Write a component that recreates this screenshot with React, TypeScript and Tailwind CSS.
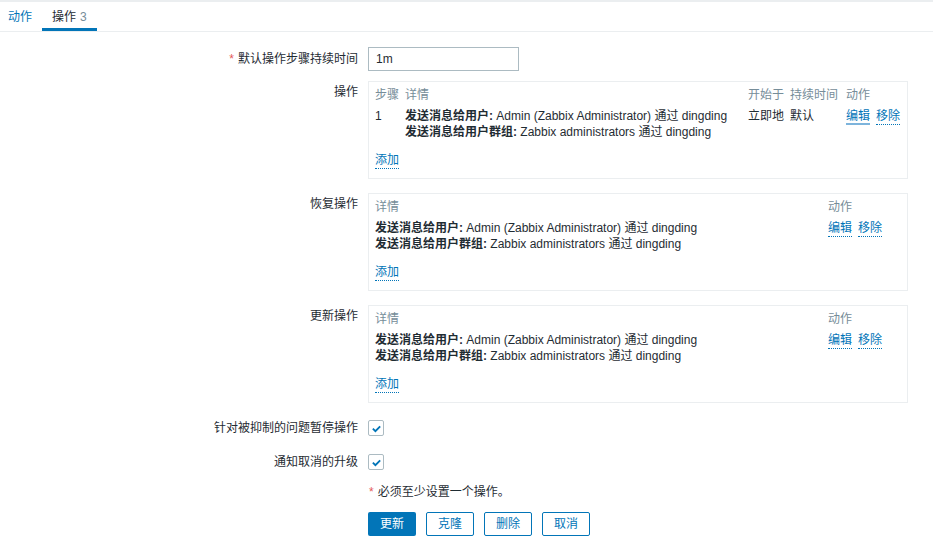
import React from "react";

const FONT = "font-['Liberation_Sans','Noto_Sans_CJK_SC',Arial,sans-serif]";

const links = "leading-[15px] border-b border-dotted border-[#0275b8] text-[#0275b8] cursor-pointer";

function Check() {
  return (
    <span className="flex h-4 w-4 items-center justify-center rounded-[2px] border border-[#acbbc2] bg-white">
      <svg viewBox="0 0 12 12" className="h-[11px] w-[11px]">
        <path d="M2 6.2 L4.8 9 L10 3.6" fill="none" stroke="#0275b8" strokeWidth="2" />
      </svg>
    </span>
  );
}

function Row({
  label,
  required,
  top,
  children,
  className = "",
}: {
  label?: string;
  required?: boolean;
  top?: boolean;
  children: React.ReactNode;
  className?: string;
}) {
  return (
    <div className={`flex ${top ? "items-start" : "items-center"} gap-[10px] ${className}`}>
      <div className={`w-[358px] shrink-0 text-right ${top ? "pt-[3px]" : ""}`}>
        {required && <span className="mr-[4px] text-[#e45959]">*</span>}
        {label}
      </div>
      <div>{children}</div>
    </div>
  );
}

function Ops({ text1, text2 }: { text1: string; text2: string }) {
  return (
    <div className="leading-4">
      <div>
        <b>发送消息给用户:</b> {text1}
      </div>
      <div>
        <b>发送消息给用户群组:</b> {text2}
      </div>
    </div>
  );
}

function OpBox({ steps }: { steps?: boolean }) {
  return (
    <div className="w-[540px] border border-[#ebeef0] px-[6px] pt-[5px] pb-[10px]">
      {steps ? (
        <div className="grid grid-cols-[30px_1fr_42px_56px_55px]">
          <div className="text-[#768d99]">步骤</div>
          <div className="text-[#768d99]">详情</div>
          <div className="text-[#768d99]">开始于</div>
          <div className="text-[#768d99]">持续时间</div>
          <div className="text-[#768d99]">动作</div>
          <div className="mt-[5px]">1</div>
          <div className="mt-[5px]">
            <Ops
              text1="Admin (Zabbix Administrator) 通过 dingding"
              text2="Zabbix administrators 通过 dingding"
            />
          </div>
          <div className="mt-[5px]">立即地</div>
          <div className="mt-[5px]">默认</div>
          <div className="mt-[6px] flex items-start gap-[6px]">
            <span className="leading-[14px] border-b-2 border-solid border-[#7db4dc] text-[#0275b8] cursor-pointer">编辑</span>
            <span className={links}>移除</span>
          </div>
        </div>
      ) : (
        <div className="grid grid-cols-[1fr_73px]">
          <div className="text-[#768d99]">详情</div>
          <div className="text-[#768d99]">动作</div>
          <div className="mt-[5px]">
            <Ops
              text1="Admin (Zabbix Administrator) 通过 dingding"
              text2="Zabbix administrators 通过 dingding"
            />
          </div>
          <div className="mt-[6px] flex items-start gap-[6px]">
            <span className={links}>编辑</span>
            <span className={links}>移除</span>
          </div>
        </div>
      )}
      <div className="mt-[12px] h-4">
        <span className={`inline-block ${links}`}>添加</span>
      </div>
    </div>
  );
}

export default function App() {
  return (
    <div className={`min-h-[545px] w-[933px] bg-white text-[12px] leading-4 text-[#1f2c33] ${FONT}`}>
      <div className="h-[2px] bg-[#ebeef0]" />
      <div className="flex h-[30px] items-stretch border-b border-[#ebeef0]">
        <div className="flex items-center pl-[8px] pr-[10px] text-[#0275b8]">动作</div>
        <div className="flex items-center border-b-[3px] border-[#0275b8] px-[10px] pt-[3px]">
          操作 <span className="ml-[4px] text-[#768d99]">3</span>
        </div>
      </div>

      <div className="pt-[15px]">
        <Row label="默认操作步骤持续时间" required>
          <input
            defaultValue="1m"
            className="h-6 w-[151px] border border-[#acbbc2] px-[7px] text-[12px] text-[#1f2c33] outline-none"
          />
        </Row>
        <Row label="操作" top className="mt-[10px]">
          <OpBox steps />
        </Row>
        <Row label="恢复操作" top className="mt-[14px]">
          <OpBox />
        </Row>
        <Row label="更新操作" top className="mt-[14px]">
          <OpBox />
        </Row>
        <Row label="针对被抑制的问题暂停操作" className="mt-[13px] h-6">
          <Check />
        </Row>
        <Row label="通知取消的升级" className="mt-[10px] h-6">
          <Check />
        </Row>
        <Row className="mt-[10px]">
          <div className="pl-[1px]">
            <span className="mr-[4px] text-[#e45959]">*</span>必须至少设置一个操作。
          </div>
        </Row>
        <Row className="mt-[12px]">
          <div className="flex gap-[10px]">
            <button className="h-6 w-12 rounded-[2px] bg-[#0275b8] text-white">更新</button>
            <button className="h-6 w-12 rounded-[2px] border border-[#0275b8] bg-white text-[#0275b8]">克隆</button>
            <button className="h-6 w-12 rounded-[2px] border border-[#0275b8] bg-white text-[#0275b8]">删除</button>
            <button className="h-6 w-12 rounded-[2px] border border-[#0275b8] bg-white text-[#0275b8]">取消</button>
          </div>
        </Row>
      </div>
    </div>
  );
}
